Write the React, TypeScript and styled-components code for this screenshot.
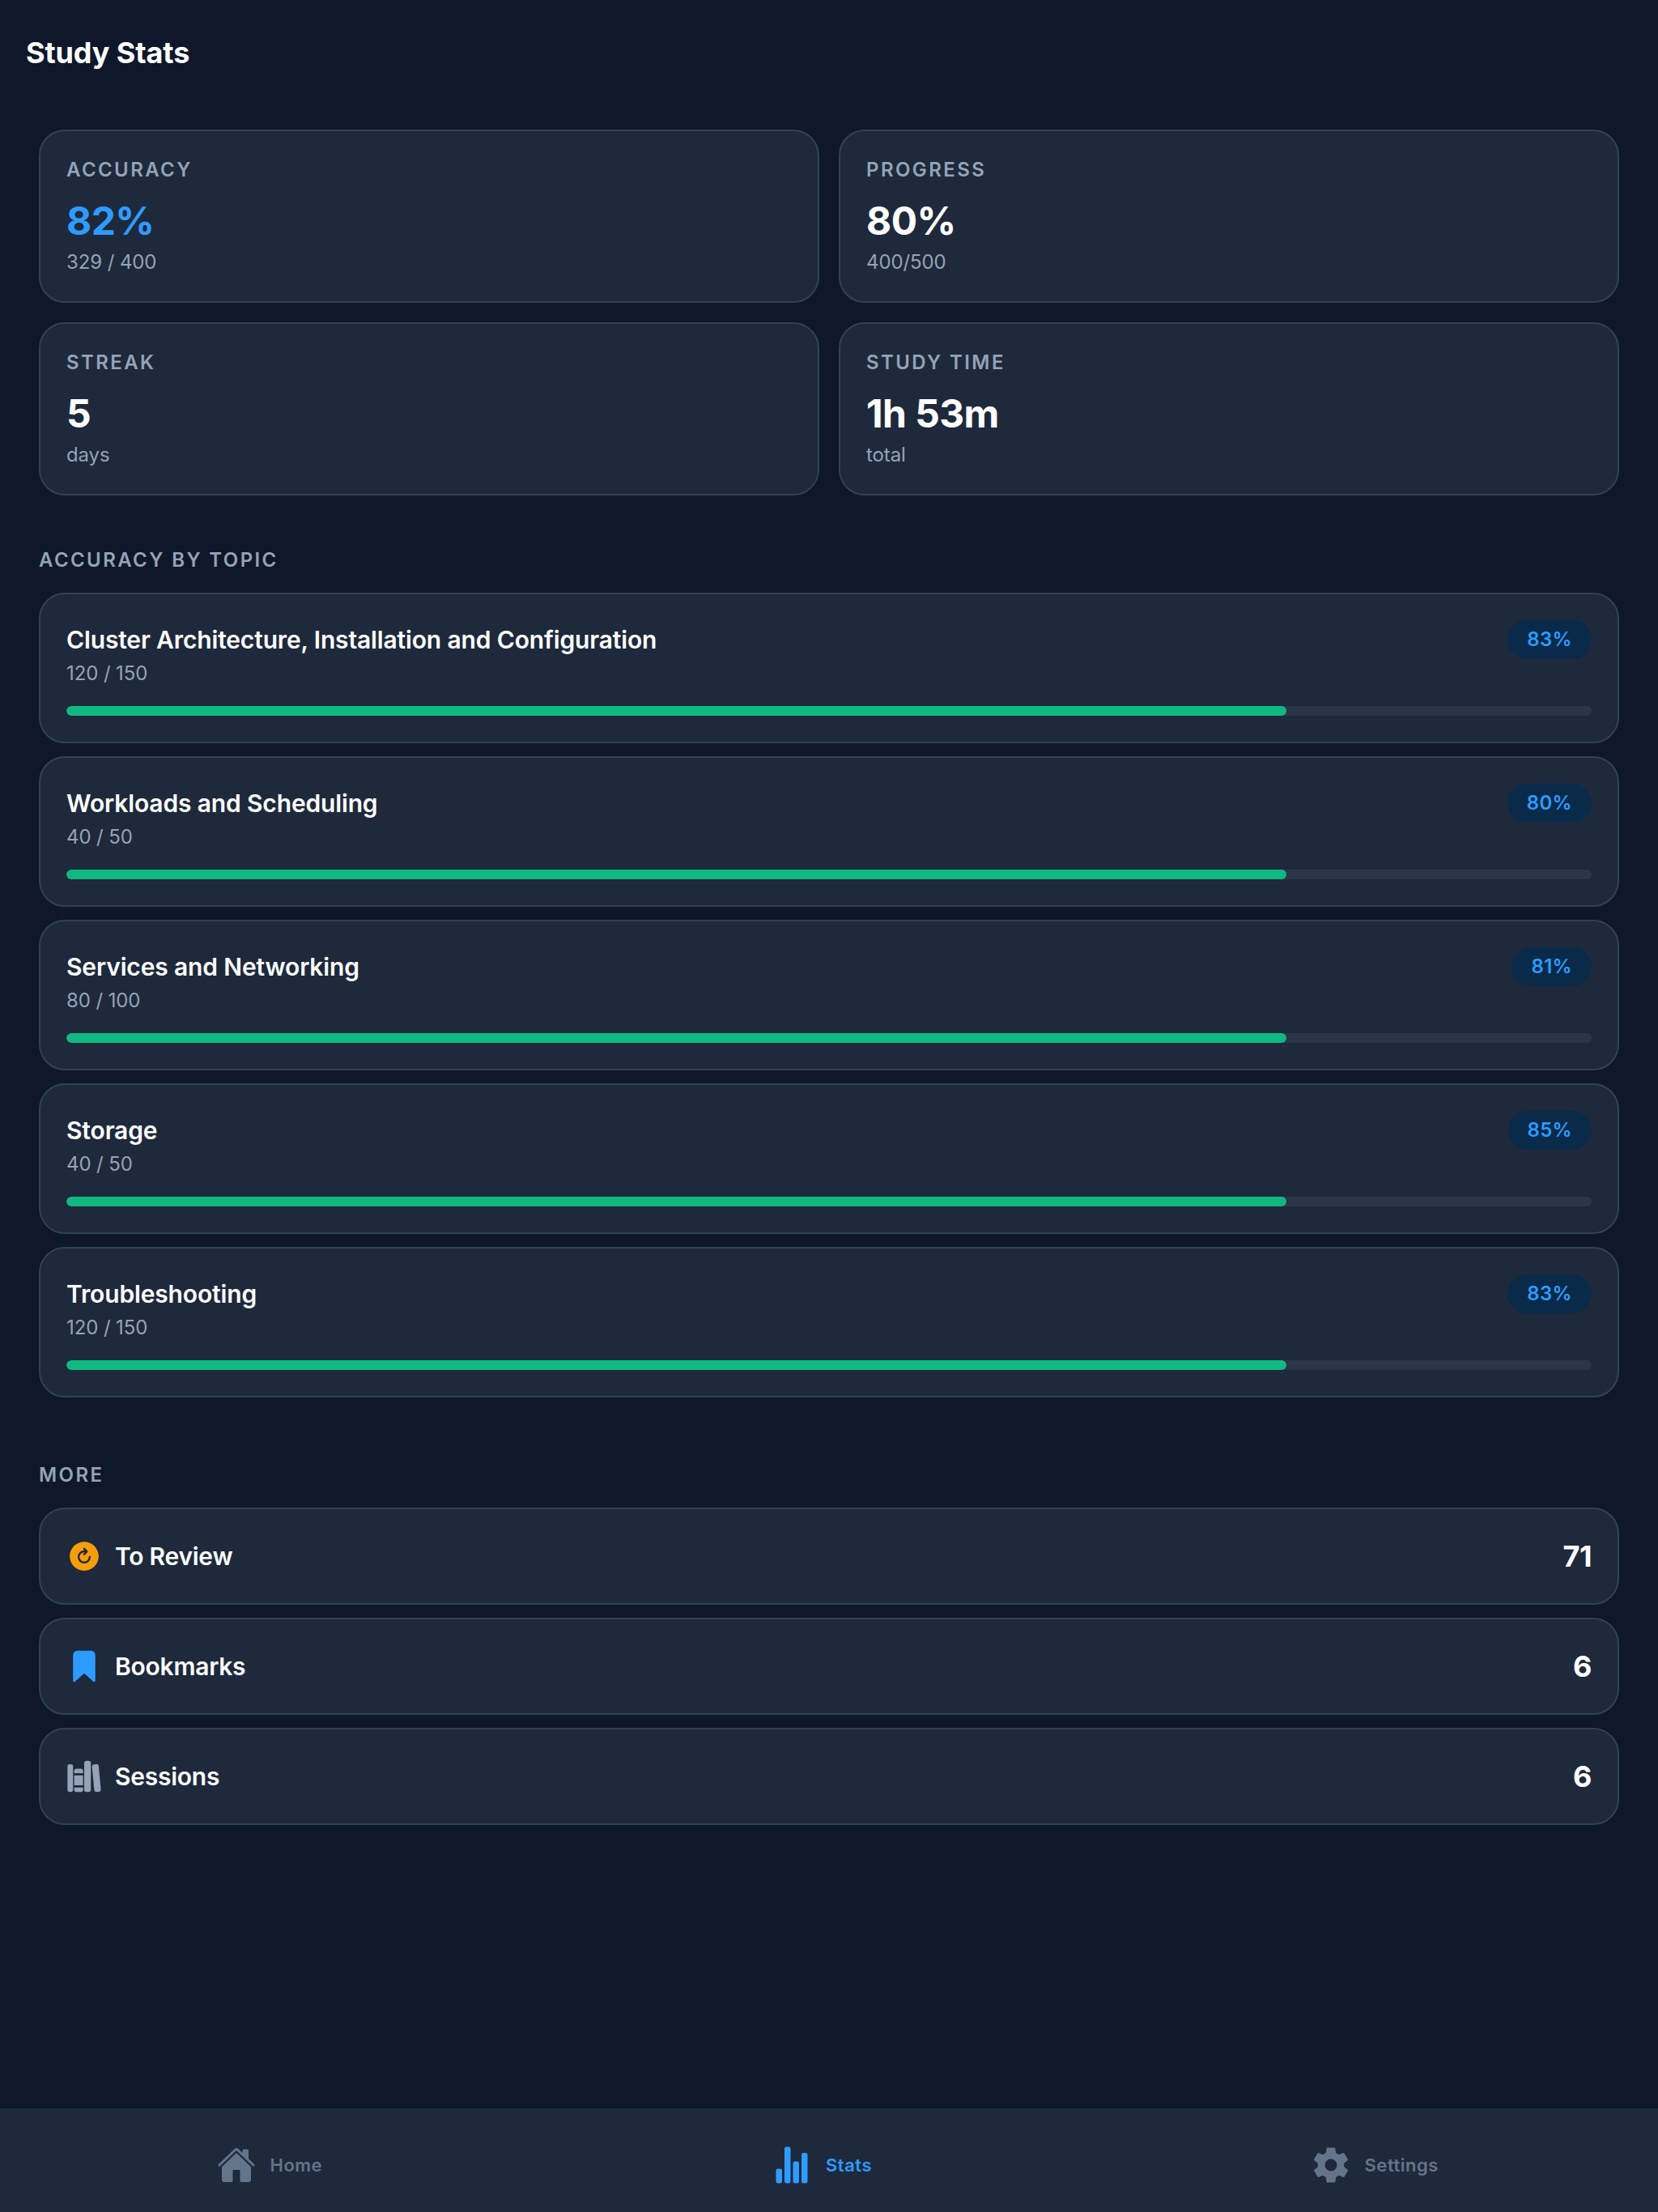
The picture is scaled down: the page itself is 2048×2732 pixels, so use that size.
import * as React from 'react'
import styled, { createGlobalStyle } from 'styled-components'
import { IoBookmark, IoHome, IoLibrary, IoRefreshCircle, IoSettingsSharp, IoStatsChart } from 'react-icons/io5'

const GlobalStyle = createGlobalStyle`
  html, body {
    margin: 0;
    padding: 0;
    background: #0f172a;
  }
  * {
    box-sizing: border-box;
  }
`

const Screen = styled.div`
  background: #0f172a;
  color: #fff;
  display: flex;
  flex-direction: column;
  font-family: Inter, "Liberation Sans", sans-serif;
  height: 2732px;
  width: 2048px;
`

const Header = styled.header`
  align-items: center;
  display: flex;
  height: 130px;
  padding: 0 32px;
`

const Title = styled.h1`
  font-size: 36px;
  font-weight: 700;
  letter-spacing: -0.1px;
  line-height: 44px;
  margin: 0;
`

const Content = styled.main`
  flex: 1;
  padding: 30px 48px 0;
`

const StatGrid = styled.div`
  display: grid;
  gap: 24px;
  grid-template-columns: 1fr 1fr;
`

const Card = styled.div`
  background: #1e293b;
  border: 2px solid #334155;
  border-radius: 32px;
`

const StatCard = styled(Card)`
  height: 214px;
  padding: 33px 32px 32px;
`

const Label = styled.div`
  color: #94a3b8;
  font-size: 24px;
  font-weight: 600;
  letter-spacing: 2.4px;
  line-height: 30px;
`

const StatValue = styled.div<{ $accent?: boolean }>`
  color: ${(p) => (p.$accent ? '#2e9bff' : '#fff')};
  font-size: 48px;
  font-weight: 700;
  letter-spacing: -0.6px;
  line-height: 66px;
  margin-top: 15px;
`

const Sub = styled.div`
  color: #94a3b8;
  font-size: 24px;
  letter-spacing: -0.1px;
  line-height: 32px;
`

const StatSub = styled(Sub)`
  margin-top: 2px;
`

const SectionLabel = styled(Label)<{ $gap: number }>`
  margin-bottom: 25px;
  margin-top: ${(p) => p.$gap}px;
`

const List = styled.div`
  display: flex;
  flex-direction: column;
  gap: 16px;
`

const TopicCard = styled(Card)`
  height: 186px;
  padding: 32px;
`

const TopicHead = styled.div`
  align-items: flex-start;
  display: flex;
  justify-content: space-between;
`

const TopicName = styled.div`
  font-size: 30px;
  font-weight: 600;
  letter-spacing: -0.15px;
  line-height: 48px;
`

const Badge = styled.div`
  background: #0a2a4a;
  border-radius: 24px;
  color: #2e9bff;
  font-size: 24px;
  font-weight: 600;
  letter-spacing: 0.3px;
  line-height: 48px;
  padding: 0 24px;
`

const TopicSub = styled(Sub)`
  margin-top: 2px;
`

const Track = styled.div`
  background: #2a3648;
  border-radius: 6px;
  height: 12px;
  margin-top: 24px;
  overflow: hidden;
`

const Fill = styled.div`
  background: #10b981;
  border-radius: 6px;
  height: 100%;
`

const Row = styled(Card)`
  align-items: center;
  display: flex;
  height: 120px;
  padding: 0 32px;
`

const RowIcon = styled.span<{ $color: string }>`
  color: ${(p) => p.$color};
  display: flex;
  margin-right: 16px;
`

const RowName = styled.div`
  flex: 1;
  font-size: 30px;
  font-weight: 600;
  letter-spacing: -0.25px;
`

const RowCount = styled.div`
  font-size: 36px;
  font-weight: 700;
  letter-spacing: -0.5px;
`

const Nav = styled.nav`
  background: #1e293b;
  display: flex;
  height: 128px;
  padding-top: 12px;
`

const Tab = styled.div<{ $active?: boolean }>`
  align-items: center;
  color: ${(p) => (p.$active ? '#2e9bff' : '#64748b')};
  display: flex;
  flex: 1;
  gap: 18px;
  font-size: 22px;
  font-weight: 600;
  justify-content: center;
  letter-spacing: 0.5px;
  padding-right: 17px;
`

const stats = [
  { label: 'ACCURACY', value: '82%', sub: '329 / 400', accent: true },
  { label: 'PROGRESS', value: '80%', sub: '400/500' },
  { label: 'STREAK', value: '5', sub: 'days' },
  { label: 'STUDY TIME', value: '1h 53m', sub: 'total' },
]

const topics = [
  { name: 'Cluster Architecture, Installation and Configuration', sub: '120 / 150', pct: '83%' },
  { name: 'Workloads and Scheduling', sub: '40 / 50', pct: '80%' },
  { name: 'Services and Networking', sub: '80 / 100', pct: '81%' },
  { name: 'Storage', sub: '40 / 50', pct: '85%' },
  { name: 'Troubleshooting', sub: '120 / 150', pct: '83%' },
]

export default function App() {
  return (
    <Screen>
      <GlobalStyle />
      <Header>
        <Title>Study Stats</Title>
      </Header>
      <Content>
        <StatGrid>
          {stats.map((s) => (
            <StatCard key={s.label}>
              <Label>{s.label}</Label>
              <StatValue $accent={s.accent}>{s.value}</StatValue>
              <StatSub>{s.sub}</StatSub>
            </StatCard>
          ))}
        </StatGrid>

        <SectionLabel $gap={65}>ACCURACY BY TOPIC</SectionLabel>
        <List>
          {topics.map((t) => (
            <TopicCard key={t.name}>
              <TopicHead>
                <TopicName>{t.name}</TopicName>
                <Badge>{t.pct}</Badge>
              </TopicHead>
              <TopicSub>{t.sub}</TopicSub>
              <Track>
                <Fill style={{ width: '80%' }} />
              </Track>
            </TopicCard>
          ))}
        </List>

        <SectionLabel $gap={81}>MORE</SectionLabel>
        <List>
          <Row>
            <RowIcon $color="#f59e0b"><IoRefreshCircle size={44} /></RowIcon>
            <RowName>To Review</RowName>
            <RowCount>71</RowCount>
          </Row>
          <Row>
            <RowIcon $color="#2e9bff"><IoBookmark size={44} /></RowIcon>
            <RowName>Bookmarks</RowName>
            <RowCount>6</RowCount>
          </Row>
          <Row>
            <RowIcon $color="#94a3b8"><IoLibrary size={44} /></RowIcon>
            <RowName>Sessions</RowName>
            <RowCount>6</RowCount>
          </Row>
        </List>
      </Content>
      <Nav>
        <Tab><IoHome size={48} />Home</Tab>
        <Tab $active><IoStatsChart size={48} />Stats</Tab>
        <Tab><IoSettingsSharp size={48} />Settings</Tab>
      </Nav>
    </Screen>
  )
}
